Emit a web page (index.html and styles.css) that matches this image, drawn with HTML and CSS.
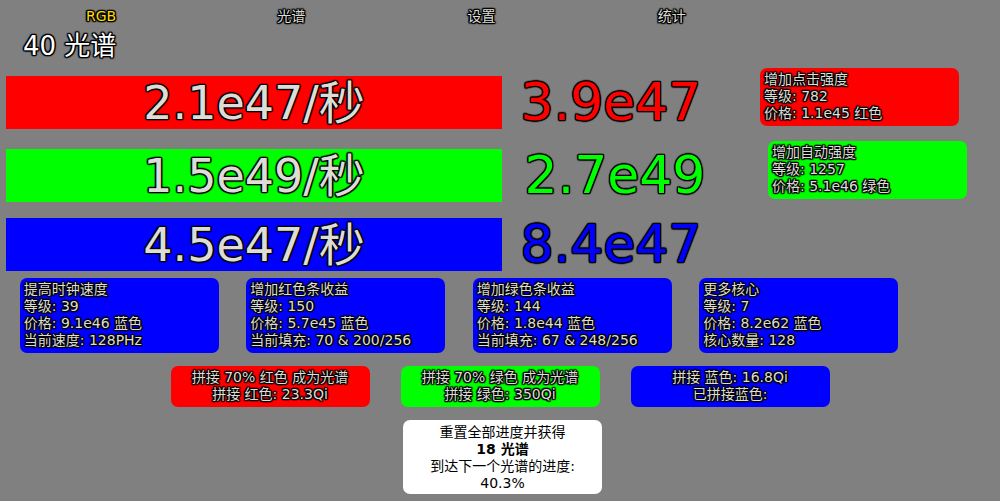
FILE: index.html
```html
<!DOCTYPE html>
<html lang="zh-CN">
<head>
<meta charset="utf-8">
<meta name="viewport" content="width=device-width, initial-scale=1">
<title>RGB</title>
<link rel="stylesheet" href="styles.css">
</head>
<body>
<nav class="tabs">
  <button class="tab tab-active" type="button">RGB</button>
  <button class="tab" type="button">光谱</button>
  <button class="tab" type="button">设置</button>
  <button class="tab" type="button">统计</button>
</nav>
<main>
  <h1 class="spectrum">40 光谱</h1>

  <section class="row">
    <div class="bar red">2.1e47/秒</div>
    <div class="amount amount-red">3.9e47</div>
    <button class="box red" type="button">增加点击强度<br>等级: 782<br>价格: 1.1e45 红色</button>
  </section>
  <section class="row row-green">
    <div class="bar green">1.5e49/秒</div>
    <div class="amount amount-green">2.7e49</div>
    <button class="box green" type="button">增加自动强度<br>等级: 1257<br>价格: 5.1e46 绿色</button>
  </section>
  <section class="row row-blue">
    <div class="bar blue">4.5e47/秒</div>
    <div class="amount amount-blue">8.4e47</div>
  </section>

  <section class="upgrades">
    <button class="box blue" type="button">提高时钟速度<br>等级: 39<br>价格: 9.1e46 蓝色<br>当前速度: 128PHz</button>
    <button class="box blue" type="button">增加红色条收益<br>等级: 150<br>价格: 5.7e45 蓝色<br>当前填充: 70 &amp; 200/256</button>
    <button class="box blue" type="button">增加绿色条收益<br>等级: 144<br>价格: 1.8e44 蓝色<br>当前填充: 67 &amp; 248/256</button>
    <button class="box blue" type="button">更多核心<br>等级: 7<br>价格: 8.2e62 蓝色<br>核心数量: 128</button>
  </section>

  <section class="splices">
    <button class="box box-center red" type="button">拼接 70% 红色 成为光谱<br>拼接 红色: 23.3Qi</button>
    <button class="box box-center green" type="button">拼接 70% 绿色 成为光谱<br>拼接 绿色: 350Qi</button>
    <button class="box box-center blue" type="button">拼接 蓝色: 16.8Qi<br>已拼接蓝色:</button>
  </section>

  <section class="prestige">
    <button class="box box-center reset" type="button">重置全部进度并获得<br><b>18 光谱</b><br>到达下一个光谱的进度:<br>40.3%</button>
  </section>
</main>
</body>
</html>
```
FILE: styles.css
```css
* {
  box-sizing: border-box;
}

body {
  margin: 0;
  padding: 8px 6px 0;
  background: #808080;
  color: #dddcd6;
  font: 14px/17px Verdana, "DejaVu Sans", "Noto Sans CJK SC", sans-serif;
  text-shadow: -1px -1px 1px #000, 0 -1px 1px #000, 1px -1px 1px #000, -1px 0 1px #000,
    1px 0 1px #000, -1px 1px 1px #000, 0 1px 1px #000, 1px 1px 1px #000,
    0 0 2px #000, 0 0 2px #000;
}

button {
  margin: 0;
  padding: 0;
  border: 0;
  background: none;
  color: inherit;
  font: inherit;
  text-shadow: inherit;
  cursor: pointer;
}

.tabs {
  display: grid;
  grid-template-columns: repeat(4, 1fr);
  width: 77%;
}

.tab-active {
  color: #ffdc00;
}

.spectrum {
  margin: 4px 0 5px 17px;
  color: #fff;
  font-size: 26px;
  font-weight: normal;
  line-height: 34px;
}

.row {
  display: grid;
  grid-template-columns: 496fr 258fr 234fr;
  align-items: start;
  margin-bottom: 12px;
}

.row-green {
  grid-template-columns: 496fr 266fr 226fr;
  margin-bottom: 8px;
}

.row-blue {
  margin-bottom: 7px;
}

.bar {
  margin-top: 8px;
  padding-top: 2px;
  font-size: 46px;
  line-height: 51px;
  text-align: center;
}

.amount {
  margin-top: 8px;
  padding-right: 40px;
  font-size: 52px;
  line-height: 53px;
  text-align: center;
}

.red {
  background: #f00;
}

.green {
  background: #0f0;
}

.blue {
  background: #00f;
}

.amount-red {
  color: #f00;
}

.amount-green {
  color: #0f0;
}

.amount-blue {
  color: #00f;
}

.box {
  width: 199px;
  padding: 3px 4px 4px;
  border-radius: 7px;
  text-align: left;
}

.box-center {
  text-align: center;
}

.upgrades {
  display: grid;
  grid-template-columns: repeat(4, 453fr) 164fr;
  justify-items: center;
  margin-bottom: 13px;
}

.splices {
  display: flex;
  justify-content: center;
  gap: 31px;
  margin-bottom: 13px;
}

.prestige {
  display: flex;
  justify-content: center;
  padding-left: 5px;
}

.reset {
  padding: 4px 4px 2px;
  background: #fff;
  color: #000;
  text-shadow: none;
}
```
